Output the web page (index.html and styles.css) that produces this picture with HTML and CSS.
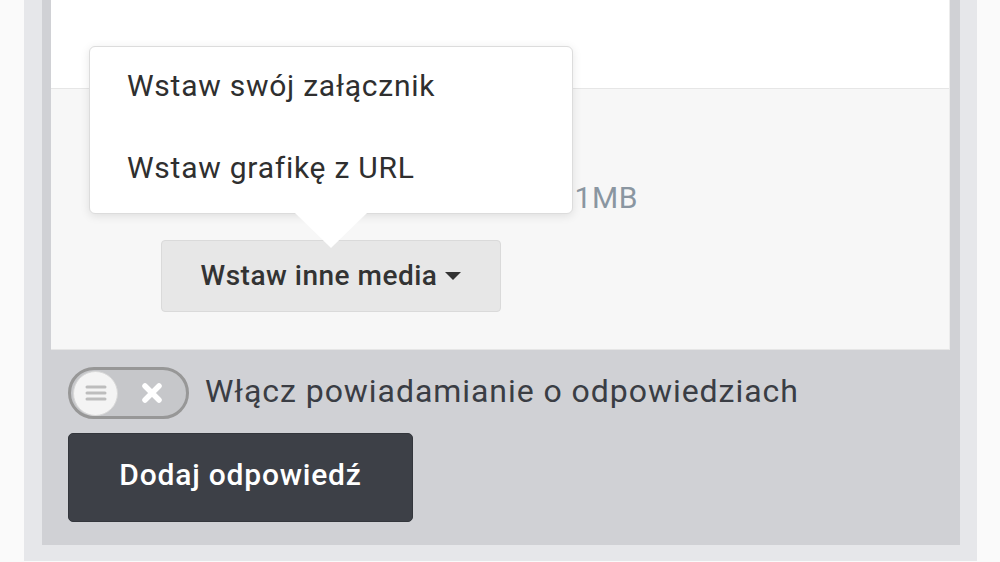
FILE: index.html
```html
<!DOCTYPE html>
<html lang="pl">
<head>
<meta charset="utf-8">
<link rel="stylesheet" href="styles.css">
</head>
<body>
<div class="outer">
  <div class="inner">
    <div class="panel">
      <div class="editor"></div>
      <div class="dropzone">
        <p class="hint">Maksymalny rozmiar grafiki: 1MB</p>
        <button class="media-btn" type="button">Wstaw inne media <span class="caret"></span></button>
      </div>
      <div class="popup">
        <div class="popup-item">Wstaw swój załącznik</div>
        <div class="popup-item">Wstaw grafikę z URL</div>
        <span class="popup-arrow"></span>
      </div>
    </div>
    <div class="notify">
      <span class="toggle">
        <span class="knob">
          <svg width="22" height="18" viewBox="0 0 22 18"><path d="M2 3h18M2 9h18M2 15h18" stroke="#bdbdbd" stroke-width="3" stroke-linecap="round"/></svg>
        </span>
        <svg class="toggle-x" width="22" height="22" viewBox="0 0 22 22"><path d="M4 4l14 14M18 4L4 18" stroke="#ffffff" stroke-width="5.5" stroke-linecap="round"/></svg>
      </span>
      <span class="notify-label">Włącz powiadamianie o odpowiedziach</span>
    </div>
    <button class="submit" type="button">Dodaj odpowiedź</button>
  </div>
</div>
</body>
</html>
```

FILE: styles.css
```css
* { box-sizing: border-box; }
html, body { margin: 0; padding: 0; }
body {
  background: #fafafa;
  font-family: Roboto, "Noto Sans", "Liberation Sans", sans-serif;
  width: 1000px;
  height: 562px;
  overflow: hidden;
}
.outer {
  margin-left: 24px;
  width: 953px;
  padding: 0 17px 16px 18px;
  background: #e6e7ea;
}
.inner {
  background: #d0d1d5;
  padding: 0 10px 23px 9px;
}
.panel {
  position: relative;
  background: #f7f7f7;
  border-right: 1px solid #ececec;
  border-bottom: 1px solid #e6e6e6;
}
.editor {
  height: 89px;
  background: #ffffff;
  border-bottom: 1px solid #e6e6e6;
}
.dropzone {
  height: 260px;
  padding-top: 89px;
  position: relative;
}
.hint {
  margin: 0;
  height: 40px;
  font-size: 30px;
  letter-spacing: 0.6px;
  color: #8a96a1;
  line-height: 40px;
  white-space: nowrap;
  text-align: right;
  padding-right: 311px;
}
.media-btn {
  margin: 22px 0 0 110px;
  width: 340px;
  height: 72px;
  display: inline-flex;
  align-items: center;
  justify-content: center;
  gap: 8px;
  background: #e7e7e7;
  border: 1px solid #dadada;
  border-radius: 4px;
  font-family: Roboto, "Noto Sans", sans-serif;
  font-size: 28px;
  letter-spacing: 0.5px;
  font-weight: 500;
  color: #333333;
  padding: 0 0 2px 0;
}
.caret {
  display: inline-block;
  width: 0;
  height: 0;
  border-left: 8px solid transparent;
  border-right: 8px solid transparent;
  border-top: 8px solid #333333;
  margin-top: 2px;
}
.popup {
  position: absolute;
  left: 38px;
  top: 46px;
  width: 484px;
  height: 168px;
  background: #ffffff;
  border: 1px solid #dcdcdc;
  border-radius: 6px;
  box-shadow: 0 2px 10px rgba(0, 0, 0, 0.1);
}
.popup-item {
  height: 82px;
  display: flex;
  align-items: center;
  padding: 0 0 5px 37px;
  font-size: 30px;
  letter-spacing: 0.75px;
  color: #2f2f2f;
}
.popup-arrow {
  position: absolute;
  left: 205px;
  top: 166px;
  width: 0;
  height: 0;
  border-left: 36px solid transparent;
  border-right: 36px solid transparent;
  border-top: 35px solid #ffffff;
}
.notify {
  display: flex;
  align-items: center;
  gap: 16px;
  margin-top: 17px;
  margin-left: 17px;
  height: 52px;
}
.toggle {
  position: relative;
  width: 121px;
  height: 52px;
  border-radius: 26px;
  background: #c6c7ca;
  border: 3px solid #979797;
  display: flex;
  align-items: center;
  padding-left: 2px;
  flex: none;
}
.knob {
  width: 45px;
  height: 45px;
  border-radius: 50%;
  background: #f4f4f4;
  border: 1px solid #d8d8d8;
  display: flex;
  align-items: center;
  justify-content: center;
}
.toggle-x {
  margin-left: 23px;
}
.notify-label {
  font-size: 32px;
  letter-spacing: 0.95px;
  color: #3a3d44;
  white-space: nowrap;
  padding-bottom: 5px;
}
.submit {
  display: block;
  margin: 14px 0 0 17px;
  width: 345px;
  height: 89px;
  background: #3d4047;
  border: 1px solid #33363c;
  border-radius: 5px;
  color: #ffffff;
  font-family: Roboto, "Noto Sans", sans-serif;
  font-size: 30px;
  letter-spacing: 0.8px;
  font-weight: 500;
  padding: 0 0 6px 0;
}
```
